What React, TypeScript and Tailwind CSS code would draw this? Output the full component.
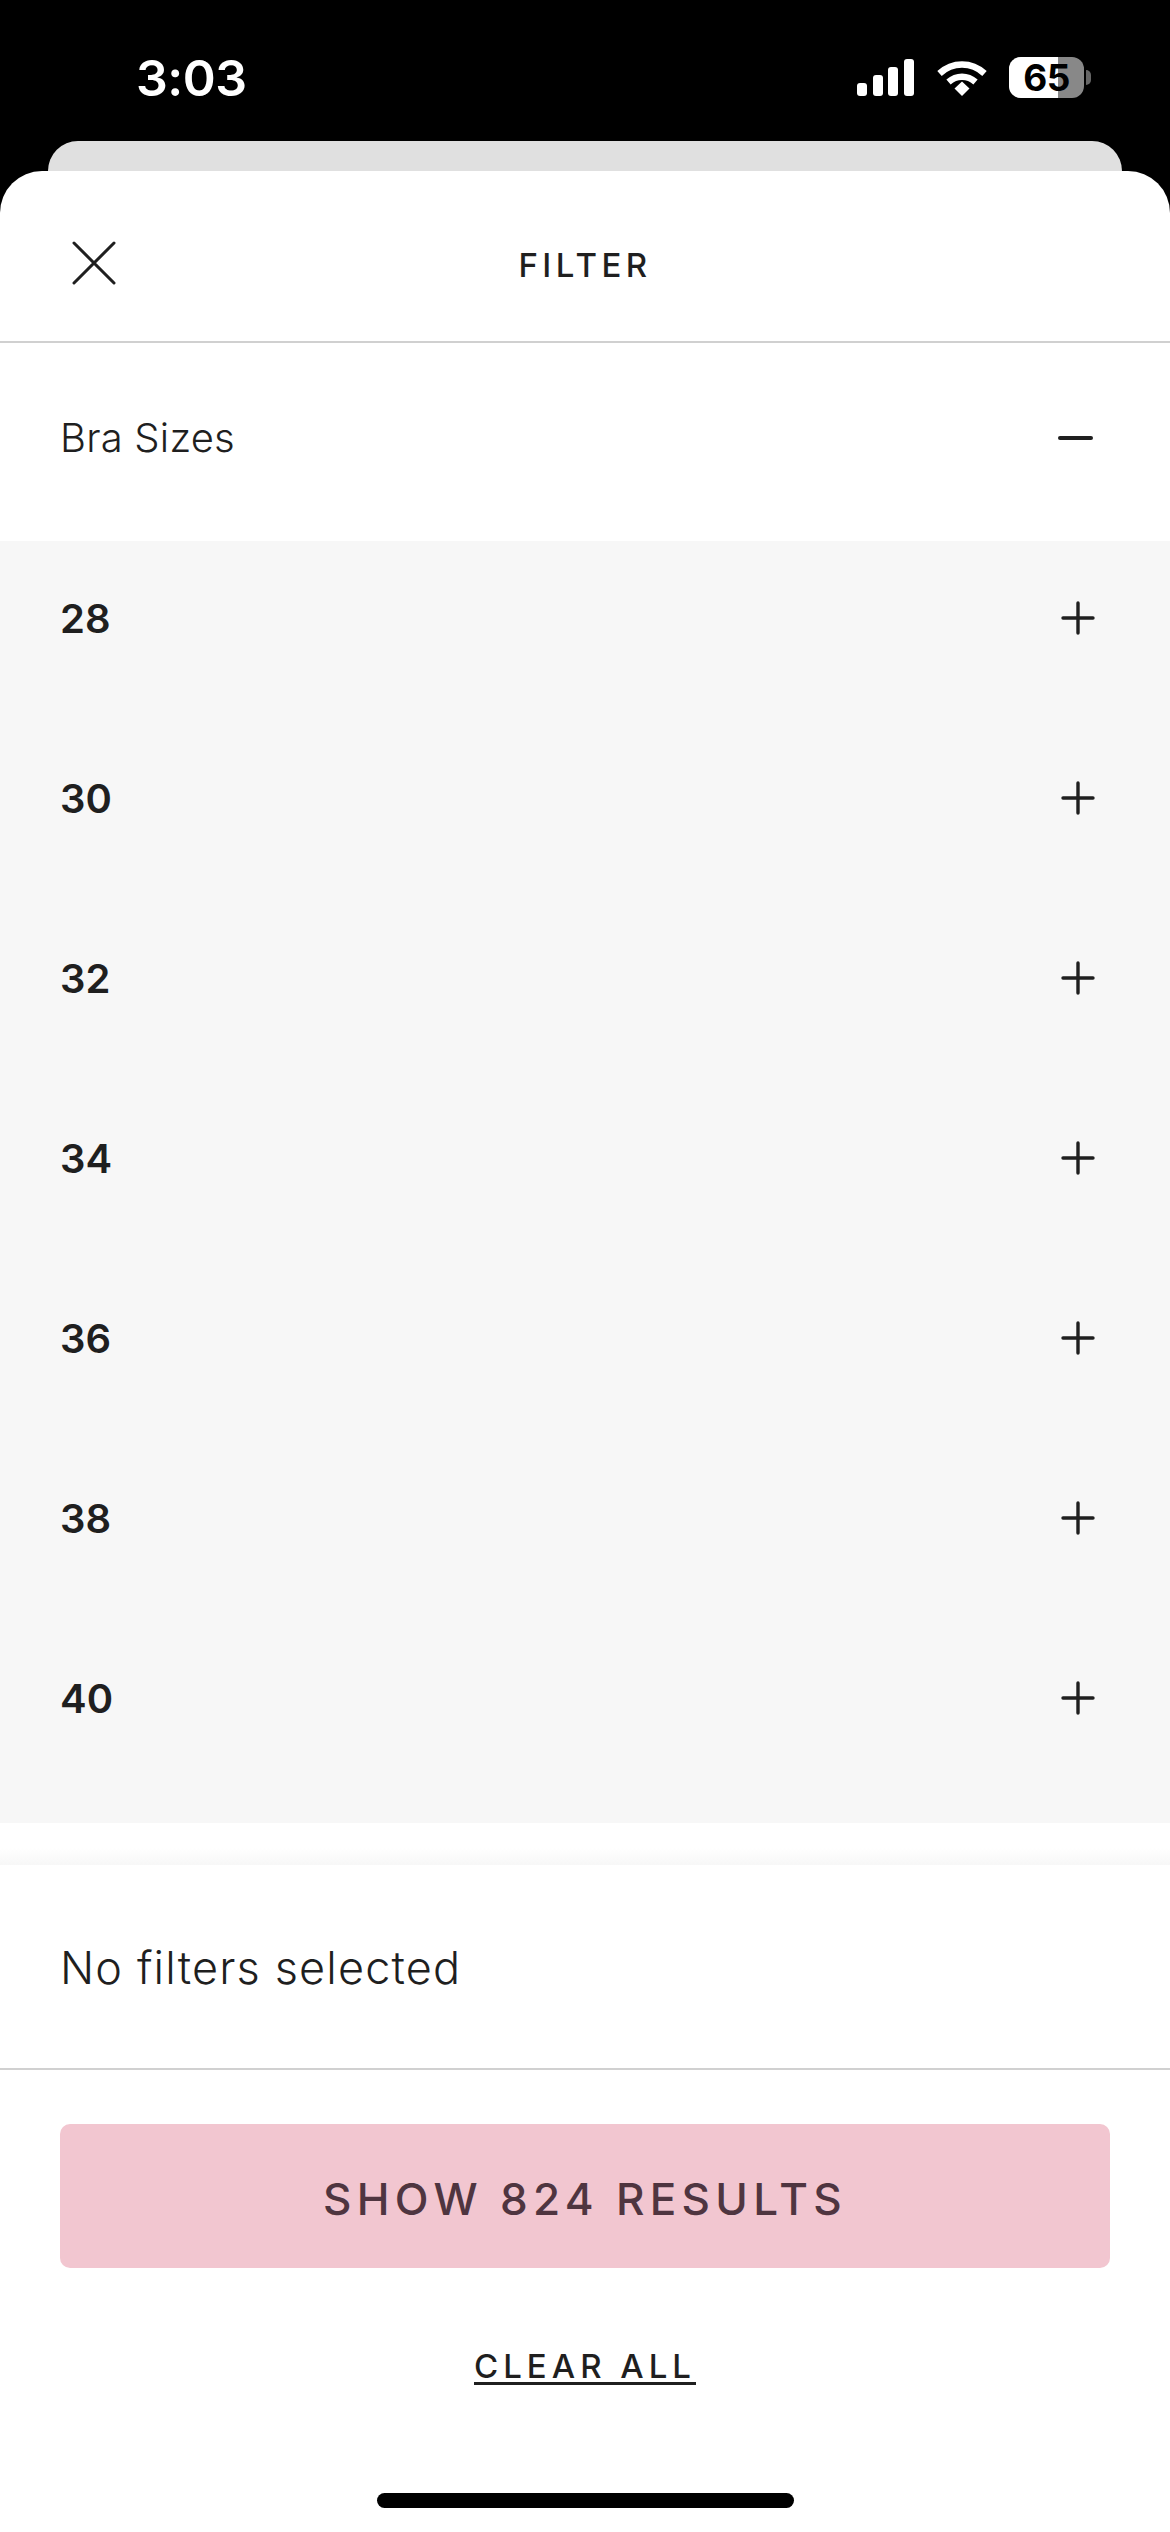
import React from 'react';

const sizes = ['28', '30', '32', '34', '36', '38', '40'];

const StatusBar = () => (
  <div className="h-[141px] flex items-start justify-between text-white">
    <span className="ml-[136px] mt-[48px] text-[50px] leading-[60px] font-semibold tracking-[-0.5px]">3:03</span>
    <div className="flex items-start mt-[57px] mr-[79px]">
      <svg width="57" height="37" viewBox="0 0 57 37" className="mt-[2px]" fill="#fff">
        <rect x="0" y="24" width="10" height="13" rx="3" />
        <rect x="16" y="16" width="10" height="21" rx="3" />
        <rect x="31" y="8" width="10" height="29" rx="3" />
        <rect x="47" y="0" width="10" height="37" rx="3" />
      </svg>
      <svg width="50" height="36" viewBox="0 0 50 36" className="ml-[23px] mt-[4px]" fill="none" stroke="#fff">
        <path d="M2.5 12.5C15.5 0.5 34.5 0.5 47.5 12.5" strokeWidth="6.5" />
        <path d="M11.5 21C19.5 14 30.5 14 38.5 21" strokeWidth="6.5" />
        <path d="M17.5 27.5L25 20.5L32.5 27.5L25 35Z" fill="#fff" stroke="none" />
      </svg>
      <div className="relative ml-[22px] w-[75px] h-[41px] rounded-[12px] bg-[#888888]">
        <div className="h-full w-[49px] rounded-l-[12px] bg-white" />
        <span className="absolute inset-0 flex items-center justify-center text-black text-[37px] leading-none font-bold tracking-[-0.5px]">65</span>
      </div>
      <div className="ml-[2px] mt-[13px] w-[5px] h-[15px] rounded-r-full bg-[#666666]" />
    </div>
  </div>
);

const PlusIcon = () => (
  <svg width="34" height="34" viewBox="0 0 34 34" stroke="#1f1f1f" strokeWidth="3.4" strokeLinecap="round">
    <path d="M17 2V32M2 17H32" />
  </svg>
);

const App = () => {
  return (
    <div className="w-[1170px] h-[2532px] bg-black overflow-hidden flex flex-col font-['Inter',sans-serif] text-[#1f1f1f]">
      <StatusBar />
      <div className="mx-[48px] h-[30px] shrink-0 rounded-t-[30px] bg-[#e0e0e0]" />
      <div className="flex-1 bg-white rounded-t-[42px] flex flex-col">
        <header className="h-[172px] shrink-0 border-b-2 border-[#d0d0d0] flex items-center relative">
          <svg width="44" height="44" viewBox="0 0 44 44" className="absolute left-[72px] top-[70px]" stroke="#1f1f1f" strokeWidth="3" strokeLinecap="round">
            <path d="M2 2L42 42M42 2L2 42" />
          </svg>
          <h1 className="w-full text-center text-[33px] leading-[40px] font-medium tracking-[4.4px] mt-[18px]">FILTER</h1>
        </header>

        <div className="h-[198px] shrink-0 flex justify-between items-start pl-[60px] pr-[77px] pt-[71px]">
          <span className="text-[40px] leading-[48px] font-light tracking-[0.2px]">Bra Sizes</span>
          <div className="mt-[22px] w-[35px] h-[4px] rounded-full bg-[#1f1f1f]" />
        </div>

        <ul className="bg-[#f7f7f7] pb-[22px] shrink-0">
          {sizes.map((s) => (
            <li key={s} className="h-[180px] pl-[60px] pr-[75px] pt-[54px] flex justify-between items-start">
              <span className="text-[40px] leading-[48px] font-semibold">{s}</span>
              <div className="mt-[6px]"><PlusIcon /></div>
            </li>
          ))}
        </ul>

        <div className="h-[42px] shrink-0 bg-gradient-to-b from-white from-60% to-[#f7f7f7]" />

        <div className="h-[205px] shrink-0 border-b-2 border-[#d0d0d0] pl-[60px] pt-[76px]">
          <p className="text-[45px] leading-[54px] font-light tracking-[1.15px]">No filters selected</p>
        </div>

        <div className="flex-1 flex flex-col items-center">
          <button className="mt-[54px] w-[1050px] h-[144px] pt-[6px] rounded-[10px] bg-[#f2c6d0] text-[#4f3540] text-[44px] leading-[54px] font-medium tracking-[5.3px]">
            SHOW 824 RESULTS
          </button>
          <a className="mt-[82px] text-[33px] leading-[32px] font-medium tracking-[5px] border-b-[3px] border-[#1f1f1f]">CLEAR ALL</a>
          <div className="mt-[108px] w-[417px] h-[15px] rounded-full bg-black" />
        </div>
      </div>
    </div>
  );
};

export default App;
